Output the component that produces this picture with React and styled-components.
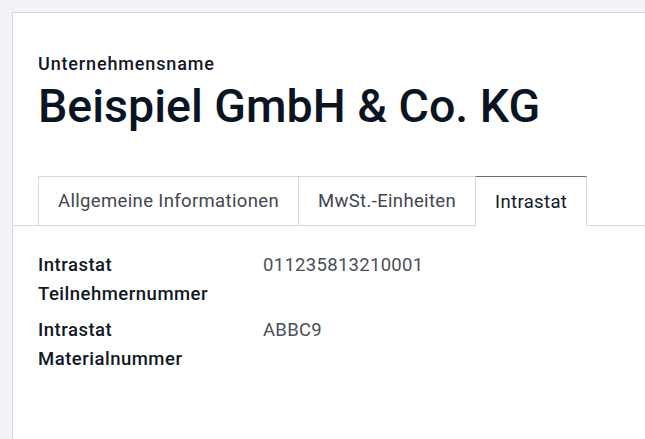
import React from "react";
import styled, { createGlobalStyle } from "styled-components";

const Global = createGlobalStyle`
  html, body { margin: 0; padding: 0; }
  body {
    background: #f2f3f7;
    font-family: Roboto, "Noto Sans", sans-serif;
    width: 645px;
    height: 439px;
    overflow: hidden;
  }
`;

const Page = styled.div`
  padding: 12px 0 0 12px;
  height: 439px;
  box-sizing: border-box;
`;

const Card = styled.div`
  background: #ffffff;
  border: 1px solid #d5d6dc;
  border-right: none;
  border-bottom: none;
  height: 100%;
  box-sizing: border-box;
  padding-top: 40px;
`;

const Header = styled.div`
  padding: 0 0 0 25px;
`;

const Label = styled.div`
  font-size: 18px;
  font-weight: 500;
  color: #111827;
  line-height: 22px;
  letter-spacing: 0.85px;
`;

const Title = styled.h1`
  margin: 2px 0 0 0;
  font-size: 46.5px;
  font-weight: 500;
  color: #0b1422;
  line-height: 58px;
`;

const TabBar = styled.div`
  display: flex;
  margin-top: 41px;
  padding-left: 25px;
  border-bottom: 1px solid #d8d8dc;
`;

const Tab = styled.div`
  box-sizing: border-box;
  display: flex;
  align-items: center;
  justify-content: center;
  padding: 0 19px;
  font-size: 18.5px;
  letter-spacing: 0.35px;
  color: ${(p) => (p.$active ? "#111827" : "#3f4650")};
  background: #fff;
  border: 1px solid #d8d8dc;
  border-top-color: ${(p) => (p.$active ? "#6c6f75" : "#d8d8dc")};
  border-bottom: none;
  margin-bottom: ${(p) => (p.$active ? "-1px" : "0")};
  height: ${(p) => (p.$active ? "50px" : "49px")};
  & + & { border-left: none; }
`;

const Fields = styled.div`
  padding: 25px 0 0 25px;
  display: grid;
  grid-template-columns: 225px 1fr;
  row-gap: 7px;
`;

const FieldLabel = styled.div`
  font-size: 18.5px;
  font-weight: 500;
  color: #111827;
  line-height: 29px;
  letter-spacing: 0.5px;
  width: 200px;
`;

const FieldValue = styled.div`
  font-size: 18.5px;
  color: #4a4f57;
  line-height: 29px;
  letter-spacing: 0.3px;
`;

export default function App() {
  const tabs = ["Allgemeine Informationen", "MwSt.-Einheiten", "Intrastat"];
  return (
    <>
      <Global />
      <Page>
        <Card>
          <Header>
            <Label>Unternehmensname</Label>
            <Title>Beispiel GmbH &amp; Co. KG</Title>
          </Header>
          <TabBar>
            {tabs.map((t, i) => (
              <Tab key={t} $active={i === 2}>{t}</Tab>
            ))}
          </TabBar>
          <Fields>
            <FieldLabel>Intrastat Teilnehmernummer</FieldLabel>
            <FieldValue>011235813210001</FieldValue>
            <FieldLabel>Intrastat Materialnummer</FieldLabel>
            <FieldValue>ABBC9</FieldValue>
          </Fields>
        </Card>
      </Page>
    </>
  );
}
